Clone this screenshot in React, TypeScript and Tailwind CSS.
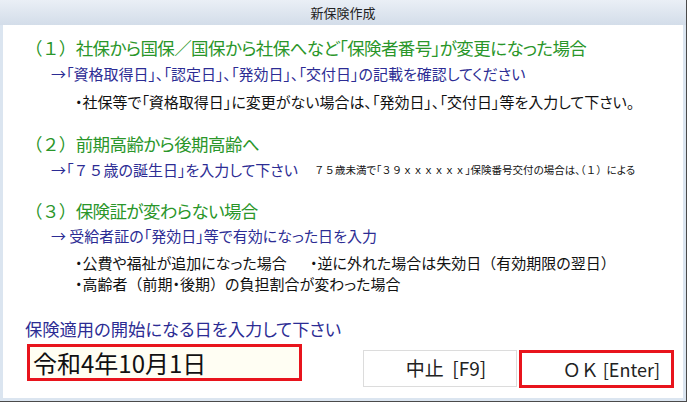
import React from "react";

const font = "font-['Meiryo_UI','Noto_Sans_CJK_JP',sans-serif] [font-feature-settings:'palt']";

// full-width segments (digits, parentheses) keep their square width as in the original dialog
function W({ children }: { children: React.ReactNode }) {
  return <span className="[font-feature-settings:normal]">{children}</span>;
}

function Heading({ children, className = "" }: { children: React.ReactNode; className?: string }) {
  return <div className={`h-6 pl-[22px] text-[17.5px] leading-6 tracking-[-0.6px] text-[#2a962a] ${className}`}>{children}</div>;
}

function Arrow({ children, className = "" }: { children: React.ReactNode; className?: string }) {
  return <div className={`h-5 pl-[48px] text-[15px] leading-5 text-[#2c2c94] ${className}`}>{children}</div>;
}

function Note({ children, className = "" }: { children: React.ReactNode; className?: string }) {
  return <div className={`flex h-5 pl-[72px] text-[15px] leading-5 text-[#111] ${className}`}>{children}</div>;
}

export default function App() {
  return (
    <div className={`h-[403px] w-[688px] overflow-hidden bg-white ${font}`}>
      <div className="flex h-[402px] w-[687px] flex-col border-r border-b border-[#4a4a4a]">
        <div className="flex h-[25px] items-center justify-center bg-gradient-to-b from-[#eaeff6] to-[#d3dde9] text-[13px] text-[#222]">
          新保険作成
        </div>
        <div className="flex flex-1 flex-col border-x-[3px] border-b-[3px] border-[#dbe5f0] bg-white">
          <Heading className="mt-[11px]"><W>（１）</W>社保から国保／国保から社保へなど「保険者番号」が変更になった場合</Heading>
          <Arrow className="mt-1">→「資格取得日」、「認定日」、「発効日」、「交付日」の記載を確認してください</Arrow>
          <Note className="mt-2">・社保等で「資格取得日」に変更がない場合は、「発効日」、「交付日」等を入力して下さい。</Note>

          <Heading className="mt-5"><W>（２）</W>前期高齢から後期高齢へ</Heading>
          <Arrow className="mt-1 flex items-center">
            <span>→「<W>７５</W>歳の誕生日」を入力して下さい</span>
            <span className="ml-[16px] text-[10.5px] text-[#111]">
              <W>７５</W>歳未満で「<W>３９ｘｘｘｘｘｘ</W>」保険番号交付の場合は、<W>（１）</W>による
            </span>
          </Arrow>

          <Heading className="mt-[19px]"><W>（３）</W>保険証が変わらない場合</Heading>
          <Arrow className="mt-[3px]">→ 受給者証の「発効日」等で有効になった日を入力</Arrow>
          <Note className="mt-[7px]">
            <span className="w-[235px]">・公費や福祉が追加になった場合</span>
            <span>・逆に外れた場合は失効日<W>（</W>有効期限の翌日<W>）</W></span>
          </Note>
          <Note className="mt-px">・高齢者<W>（</W>前期・後期<W>）</W>の負担割合が変わった場合</Note>

          <div className="mt-6 h-[22px] pl-[22px] text-[17.3px] leading-[22px] text-[#2c2c94]">保険適用の開始になる日を入力して下さい</div>

          <div className="mt-1 flex items-start pl-[24px]">
            <div className="flex h-[37px] w-[275px] items-center border-[3px] border-[#e8141c] bg-[#fffef3] pl-[3px] text-[24px] text-[#111]">
              令和4年10月1日
            </div>
            <div className="ml-[61px] mt-[6px] flex h-[37px] w-[154px] items-center justify-center border border-[#dcdcdc] bg-white pl-[12px] text-[19px] text-[#222]">
              中止&nbsp;&nbsp;[F9]
            </div>
            <div className="ml-[2px] mt-[6px] flex h-[38px] w-[155px] items-center justify-end border-[3px] border-[#e8141c] bg-white pr-[11px] text-[18px] text-[#222]">
              <W>ＯＫ</W>&nbsp;[Enter]
            </div>
          </div>
        </div>
      </div>
    </div>
  );
}
